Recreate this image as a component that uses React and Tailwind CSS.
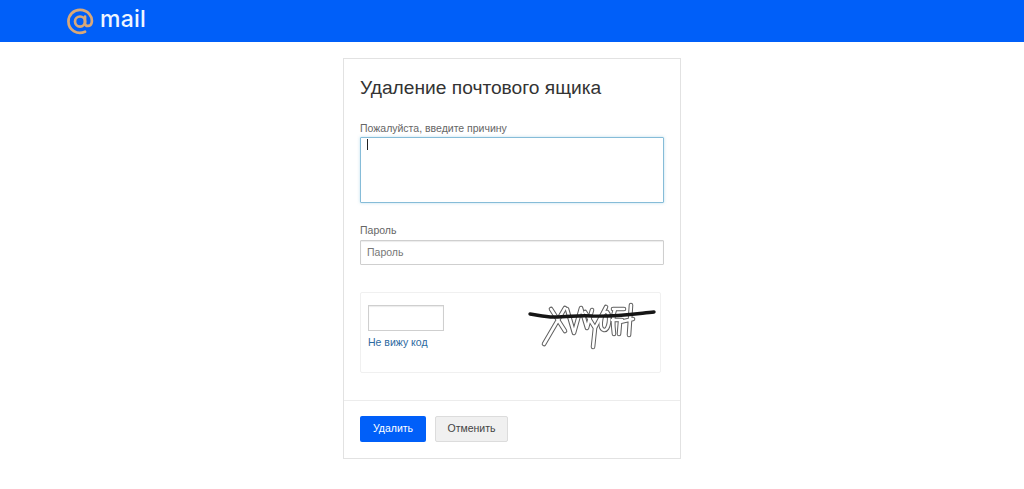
const AtLogo = () => (
  <svg width="27" height="28" viewBox="0 0 28 28" fill="none" stroke="#d9a878" strokeWidth="2.8">
    <circle cx="13.5" cy="13.5" r="5.2" />
    <path d="M18.7 8.5v6.8c0 4 5.8 3.6 6.8-.3 1.6-6.6-3.8-13.5-12-13.5C6.6 1.5 1.5 6.8 1.5 13.5c0 8.6 9 14.4 17.2 10.6" strokeLinecap="round" />
  </svg>
);

const captchaLetters = (
  <>
    <path d="M25 9l14 22M39 8L18 44" />
    <path d="M41 9l7 24 7-25 6 20 5-18" />
    <path d="M59 12l10 16-2 19M80 7L69 28" />
    <path d="M79 12c-5 4-6 17-1 18 5 1 7-14 3-18" />
    <path d="M89 9c-3 8-2 16-1 25M87 9h11M86 20h10" />
    <path d="M105 5l-2 30M107 19l-13 3M94 22l-1 12" />
  </>
);

// distorted captcha letters, outline strokes plus the line across
const Captcha = () => (
  <svg width="132" height="52" viewBox="0 0 132 52" fill="none" strokeLinecap="round" strokeLinejoin="round">
    <g stroke="#5f5f5f" strokeWidth="4.6">{captchaLetters}</g>
    <g stroke="#fff" strokeWidth="2.6">{captchaLetters}</g>
    <path d="M4 14c8 1 14 3 24 3 16 0 24-2 38-1 22 1 42-2 62-4" stroke="#151515" strokeWidth="3.4" />
  </svg>
);

export default function App() {
  return (
    <div className="min-h-[489px] bg-white font-['Liberation_Sans',Arial,sans-serif]">
      {/* Top bar */}
      <div className="flex h-[42px] items-center gap-[6px] bg-[#005ff9] pl-[67px] pt-[1px]">
        <AtLogo />
        <span className="pb-[4px] font-['Inter',sans-serif] text-[23px] font-medium leading-none tracking-[0.2px] text-[#eef5ff]">mail</span>
      </div>

      {/* Card */}
      <div className="ml-[343px] mt-4 w-[338px] border border-[#e2e2e2] bg-white">
        <div className="px-4">
          <h1 className="pt-[16px] text-[19.2px] leading-[26px] text-[#333]">Удаление почтового ящика</h1>

          <label className="mt-[20px] block text-[10.5px] leading-[14px] text-[#666]">Пожалуйста, введите причину</label>
          <div className="relative mt-[2px] h-[66px] w-[304px] rounded-[1px] border border-[#86bcd8] bg-white shadow-[0_0_3px_rgba(120,190,220,0.5)]">
            <span className="absolute left-[6px] top-[1px] h-[11px] w-px bg-[#222]" />
          </div>

          <label className="mt-[20px] block text-[10.5px] leading-[14px] text-[#666]">Пароль</label>
          <div className="mt-[3px] flex h-[25px] w-[304px] items-center rounded-[1px] border border-[#cfcfcf] bg-white pl-[6px] text-[10.5px] text-[#777] shadow-[inset_0_1px_1px_rgba(0,0,0,0.08)]">
            Пароль
          </div>

          {/* Captcha block */}
          <div className="mt-[27px] flex h-[81px] w-[301px] justify-between rounded-[2px] border border-[#f0f0f0] pl-[7px] pr-[2px] pt-[7px]">
            <div className="pt-[5px]">
              <div className="h-[26px] w-[76px] border border-[#cfcfcf] bg-white shadow-[inset_0_1px_1px_rgba(0,0,0,0.08)]" />
              <a className="mt-[4px] block text-[10.5px] leading-[14px] text-[#2d6a9f]">Не вижу код</a>
            </div>
            <Captcha />
          </div>
        </div>

        {/* Footer */}
        <div className="mt-[27px] flex gap-[9px] border-t border-[#ececec] px-4 pb-[16px] pt-[15px]">
          <button className="h-[26px] w-[66px] rounded-[2px] bg-[#005ff9] pb-[1px] text-[10.5px] text-white">Удалить</button>
          <button className="h-[26px] w-[73px] rounded-[2px] border border-[#dcdcdc] bg-[#f0f0f0] pb-[1px] text-[10.5px] text-[#444]">Отменить</button>
        </div>
      </div>
    </div>
  );
}
